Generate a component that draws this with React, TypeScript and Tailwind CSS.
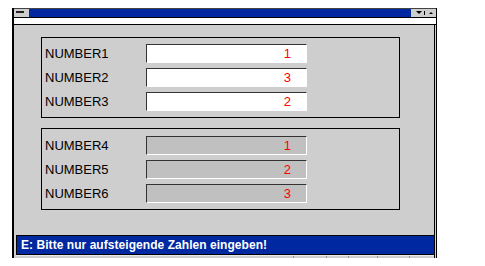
const groupA = [
  { label: "NUMBER1", value: "1" },
  { label: "NUMBER2", value: "3" },
  { label: "NUMBER3", value: "2" },
];

const groupB = [
  { label: "NUMBER4", value: "1" },
  { label: "NUMBER5", value: "2" },
  { label: "NUMBER6", value: "3" },
];

function Field({ label, value, disabled }: { label: string; value: string; disabled?: boolean }) {
  return (
    <div className="flex h-[19px] items-center">
      <span className="w-[104px] pl-[3px] text-[13px] leading-none text-black">{label}</span>
      <div
        className={
          disabled
            ? "flex h-full w-[161px] items-center justify-end border border-[#333] border-r-white border-b-white bg-[#c0c0c0] pr-[15px] text-[13px] leading-none text-[#ff0000]"
            : "flex h-full w-[161px] items-center justify-end border border-[#333] border-r-white border-b-white bg-white pr-[15px] text-[13px] leading-none text-[#ff0000]"
        }
      >
        {value}
      </div>
    </div>
  );
}

function Group({ rows, disabled, top }: { rows: typeof groupA; disabled?: boolean; top: string }) {
  return (
    <div className={`flex w-[359px] flex-col gap-[5px] border border-black pb-[6px] ${top}`}>
      {rows.map((row) => (
        <Field key={row.label} label={row.label} value={row.value} disabled={disabled} />
      ))}
    </div>
  );
}

function TitleControls() {
  return (
    <svg width="25" height="8" viewBox="0 0 25 8">
      <polygon points="5,2 11,2 8,5" fill="#000" />
      <rect x="13" y="2" width="1" height="4" fill="#000" />
      <polygon points="18,5 22,5 20,3" fill="#000" />
    </svg>
  );
}

export default function App() {
  return (
    <div
      className="h-[266px] w-[485px] overflow-hidden bg-white pt-[8px] pl-[12px]"
      style={{ fontFamily: '"Liberation Sans", Arial, sans-serif' }}
    >
      <div className="flex h-[250px] w-[425px] flex-col border-l-2 border-r border-black bg-[#cecece]">
        <div className="flex h-[9px] border-t border-[#444]">
          <div className="w-[15px]">
            <div className="mt-[2px] ml-[2px] h-[2px] w-[8px] bg-[#222]" />
          </div>
          <div className="h-[8px] flex-1 bg-[#0028a0]" />
          <div className="w-[25px]">
            <TitleControls />
          </div>
        </div>
        <div className="h-[8px] border-y border-black bg-white" />
        <div className="mr-[1px] flex flex-1 flex-col border-r border-black">
          <div className="flex h-[210px] flex-col gap-[10px] pt-[12px] pl-[27px]">
            <Group rows={groupA} top="pt-[6px]" />
            <Group rows={groupB} disabled top="pt-[7px]" />
          </div>
          <div className="ml-[2px] flex h-[20px] items-center border-y border-l border-black bg-[#0028a0] pl-[4px] text-[12px] font-bold tracking-[0.05px] text-white">
            E: Bitte nur aufsteigende Zahlen eingeben!
          </div>
          <div className="ml-[2px] flex flex-1 border-t border-[#e8e8e8]">
            <div className="w-[277px]" />
            <div className="w-[33px] border-l border-[#999]" />
            <div className="w-[22px] border-l border-[#999]" />
            <div className="w-[29px] border-l border-[#999]" />
            <div className="w-[32px] border-l border-[#999]" />
            <div className="flex-1 border-l border-[#999]" />
          </div>
        </div>
      </div>
    </div>
  );
}
